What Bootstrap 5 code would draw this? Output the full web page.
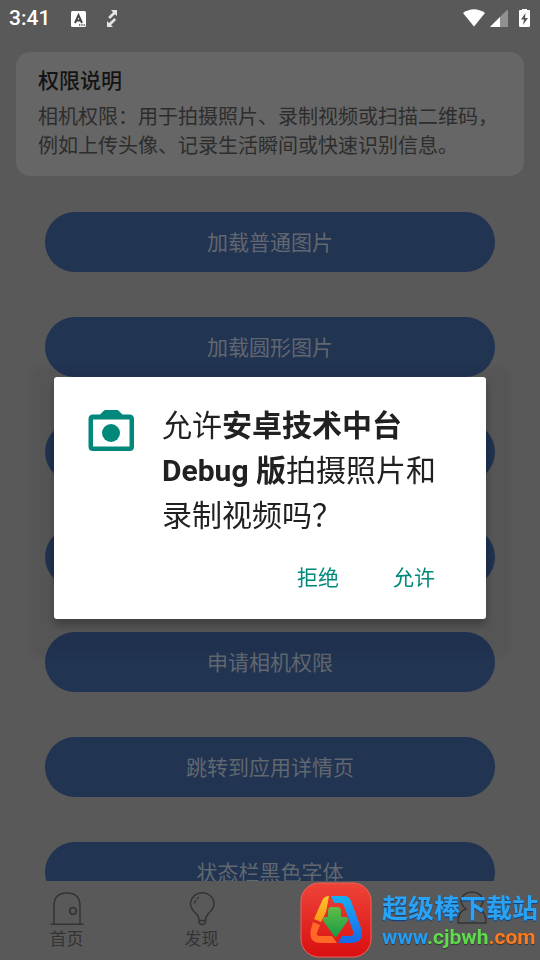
<!DOCTYPE html>
<html lang="zh-CN">
<head>
<meta charset="utf-8">
<meta name="viewport" content="width=device-width, initial-scale=1">
<title>权限说明</title>
<link rel="stylesheet" href="https://cdn.jsdelivr.net/npm/bootstrap@5.3.0/dist/css/bootstrap.min.css">
<style>
  body { background: #595959; font-family: Roboto, "Noto Sans CJK SC", sans-serif; }
  .status-bar { height: 38px; color: #fff; font-size: 21px; font-weight: 500; padding: 0 8px 0 9px; }
  .status-bar svg, .tab svg { display: block; }
  .notice { background: #666; border-radius: 14px; margin: 14px 16px 36px; padding: 14px 22px 15px; color: #2d2d2d; }
  .notice h1 { font-size: 21px; line-height: 31px; font-weight: 500; color: #141414; margin: 0 0 6px; }
  .notice p { font-size: 20px; line-height: 29px; margin: 0 -8px 0 0; }
  .actions { gap: 45px; padding: 0 45px; }
  .action { height: 60px; flex: none; background: #213452; color: #61676f; font-size: 21px; padding: 3px 0 0; }
  .tabs { height: 79px; color: #343434; }
  .tab { color: inherit; font-size: 17px; line-height: 26px; padding: 10px 2px 0 0; border: 0; background: none; }
  .scrim { padding-top: 36px; }
  .dialog-box { width: 80%; background: #fff; border-radius: 3px; color: #212121; padding: 26px 24px 17px 32px;
    box-shadow: 0 6px 10px rgba(0,0,0,.28), 0 14px 4px 24px rgba(0,0,0,.04); }
  .dialog-box h2 { font-size: 30px; line-height: 45px; font-weight: 400; margin: 0; padding-left: 26px; }
  .dialog-box strong { font-weight: 700; }
  .choices { gap: 30px; margin-top: 16px; padding-right: 15px; }
  .choice { color: #00897b; font-size: 21px; line-height: 32px; padding: 8px 12px; border: 0; }
  .site-link { z-index: 5; gap: 10px; right: 2px; bottom: 2px; }
  .site-name { font: 700 26px/34px "Noto Sans CJK SC", sans-serif; color: #2aa3f5; text-shadow: 0 1px 1px #0b3f86; }
  .site-url { font: 700 21px/26px Roboto, sans-serif; color: #229cf5; text-shadow: 0 1px 1px #333; }
  .url-green { color: #5fdc4c; }
  .url-orange { color: #ff7a1c; }
</style>
<script src="https://cdn.jsdelivr.net/npm/bootstrap@5.3.0/dist/js/bootstrap.bundle.min.js"></script>
</head>
<body>
<div class="vh-100 d-flex flex-column overflow-hidden">
  <header class="status-bar d-flex align-items-center flex-shrink-0">
    <span>3:41</span>
    <svg class="ms-3" width="24" height="20" viewBox="0 0 24 20"><rect x="5" y="2" width="15" height="16" rx="1.500" fill="#fff"/><path d="M9 14l3.500-8 3.500 8M10.200 11.500h4.600" fill="none" stroke="#444" stroke-width="1.900"/><path d="M13 16h1.300m1 0h1.300m1 0h1.300" stroke="#444" stroke-width="1.400"/></svg>
    <svg class="ms-3" width="14" height="20" viewBox="0 0 14 20"><path d="M5 1h6v6L8.900 5.200 4 10 2.200 8 7 3.200zM1 18v-6l2 2 5.500-5 1.500 2-5 5 2 2z" fill="#e4e4e4"/></svg>
    <svg class="ms-auto" width="24" height="20" viewBox="0 0 24 20"><path d="M1 4Q12-3.500 23 4L12 17.500z" fill="#fff"/></svg>
    <svg class="ms-1" width="18" height="18" viewBox="0 0 18 18"><path d="M0 17L18-1v18z" fill="#919191"/><path d="M0 17l10-10v10z" fill="#fff"/></svg>
    <svg class="ms-2" width="16" height="20" viewBox="0 0 16 20"><path d="M6-1h5v2h2q1 0 1 1v14.500q0 1.500-1 1.500H4Q3 18 3 16.500V2q0-1 1-1h2z" fill="#fff"/><path d="M9.500 4L5 10.500h3L7 16l5-7H9z" fill="#555"/></svg>
  </header>
  <main class="flex-grow-1 overflow-hidden">
    <section class="notice">
      <h1>权限说明</h1>
      <p>相机权限：用于拍摄照片、录制视频或扫描二维码，例如上传头像、记录生活瞬间或快速识别信息。</p>
    </section>
    <div class="actions d-flex flex-column">
      <button type="button" class="action btn rounded-pill">加载普通图片</button>
      <button type="button" class="action btn rounded-pill">加载圆形图片</button>
      <button type="button" class="action btn rounded-pill"></button>
      <button type="button" class="action btn rounded-pill"></button>
      <button type="button" class="action btn rounded-pill">申请相机权限</button>
      <button type="button" class="action btn rounded-pill">跳转到应用详情页</button>
      <button type="button" class="action btn rounded-pill">状态栏黑色字体</button>
    </div>
  </main>
  <nav class="tabs row g-0 flex-shrink-0">
    <button type="button" class="tab col-3 d-flex flex-column align-items-center">
      <svg width="36" height="35" viewBox="0 0 36 35" fill="none" stroke="currentColor" stroke-width="1.500"><path d="M5 33V15Q5 2 18 2T31 15v18M1.500 33.200h33"/><circle cx="24" cy="20" r="3.300" stroke-width="1.800"/></svg>
      首页
    </button>
    <button type="button" class="tab col-3 d-flex flex-column align-items-center">
      <svg width="36" height="35" viewBox="0 0 36 35" fill="none" stroke="currentColor" stroke-width="1.500" stroke-linecap="round"><path d="M15 29.500q0-4-3-7Q6.500 17.500 6.500 13a11.700 11.300 0 0 1 23.500 0q0 4.500-5.500 9.500-3 3-3 7zM15 29.500v1q0 3 3.200 3t3.300-3v-1M10.500 12l1.200-2.500M13.500 7.500l.8-.7"/></svg>
      发现
    </button>
    <button type="button" class="tab col-3 offset-3 d-flex flex-column align-items-center" aria-label="个人中心">
      <svg width="36" height="35" viewBox="0 0 36 35" fill="none" stroke="currentColor" stroke-width="1.500"><path d="M12 18Q7 14 7 10a11 9 0 0 1 22 0q0 4-5 8 8 2 8 14H4q0-12 8-14z"/></svg>
    </button>
  </nav>
</div>

<div class="scrim position-fixed top-0 start-0 w-100 h-100 d-flex align-items-center justify-content-center">
  <div class="dialog-box" role="dialog" aria-labelledby="ask">
    <div class="d-flex align-items-start">
      <svg class="flex-shrink-0 mt-1" width="50" height="50" viewBox="0 0 50 50"><path fill="#00897b" fill-rule="evenodd" d="M19.500 3h11.500q1 0 1.700.7L36.500 7.500H43.500Q48 7.500 48 12V39.500q0 4.500-4.500 4.500H7Q2.500 44 2.500 39.500V12Q2.500 7.500 7 7.500h7L17.800 3.700Q18.500 3 19.500 3zM7 12.500V39.500H43.500V12.500z"/><circle cx="25" cy="26" r="9" fill="#00897b"/></svg>
      <h2 id="ask">允许<strong>安卓技术中台 Debug 版</strong>拍摄照片和录制视频吗？</h2>
    </div>
    <div class="choices d-flex justify-content-end">
      <button type="button" class="choice btn">拒绝</button>
      <button type="button" class="choice btn">允许</button>
    </div>
  </div>
</div>

<a href="#" class="site-link position-fixed d-flex align-items-center text-decoration-none">
  <svg width="72" height="76" viewBox="0 0 72 76">
    <defs>
      <linearGradient id="red" x2="0" y2="1"><stop stop-color="#ee4438"/><stop offset="1" stop-color="#d90f10"/></linearGradient>
      <linearGradient id="gold" x2="0" y2="1"><stop stop-color="#ffc52d"/><stop offset="1" stop-color="#fa9816"/></linearGradient>
      <linearGradient id="blue" x2="0" y2="1"><stop stop-color="#18aef5"/><stop offset="1" stop-color="#1768e8"/></linearGradient>
      <linearGradient id="green" x2="0" y2="1"><stop stop-color="#62bd48"/><stop offset="1" stop-color="#159b45"/></linearGradient>
    </defs>
    <rect x="1" y="1" width="70" height="74" rx="18" fill="url(#red)" stroke="#f0635a"/>
    <path d="M29 14L26 30 21 40 14 37 22 19Q24 14 29 14z" fill="url(#gold)"/>
    <path d="M13 40L20 43 17 51Q16 54 20 54H32L37 61H21Q8 61 11 47z" fill="#ff6826"/>
    <path d="M31 14H44Q49 14 51 19L61 46Q65 60 52 61H38L42 54H50Q55 54 53 49L44 24Q43 21 40 21H34z" fill="url(#blue)"/>
    <path d="M28 29Q28 25 32 25H37Q41 25 41 29V35H46Q50 36 47 40L35.500 56 24 40Q21 35 25 35H28z" fill="url(#green)"/>
  </svg>
  <span class="d-flex flex-column">
    <span class="site-name">超级棒下载站</span>
    <span class="site-url">www<span class="url-green">.cjbwh</span><span class="url-orange">.com</span></span>
  </span>
</a>
</body>
</html>
